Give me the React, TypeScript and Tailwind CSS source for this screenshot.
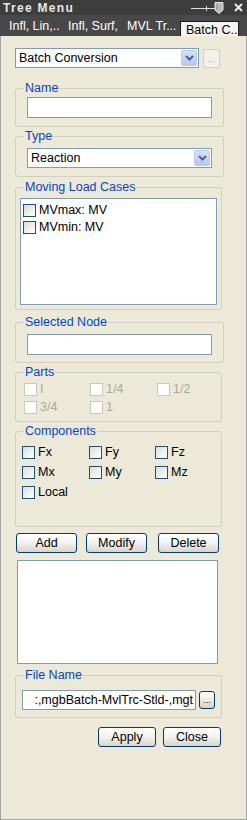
import type { ReactNode } from 'react';

const font = "font-['Liberation_Sans',Arial,sans-serif]";

function Group({ title, className = '', children }: { title: string; className?: string; children: ReactNode }) {
  return (
    <fieldset className={`w-[207px] rounded-[3px] border border-[#d0d0bf] ${className}`}>
      <legend className="ml-[8px] px-[1px] text-[12.5px] leading-[14px] text-[#0046d5]">{title}</legend>
      {children}
    </fieldset>
  );
}

function Check({ label, disabled = false }: { label: string; disabled?: boolean }) {
  return (
    <div className="flex h-[14px] items-center gap-[3px]">
      <span
        className={
          disabled
            ? 'h-[13px] w-[13px] border border-[#cac8bb] bg-white'
            : 'h-[13px] w-[13px] border border-[#1c5180] bg-gradient-to-br from-[#dcdcd7] to-white'
        }
      />
      <span className={`text-[12.5px] leading-[14px] ${disabled ? 'text-[#aca899]' : 'text-black'}`}>{label}</span>
    </div>
  );
}

function Btn({ label, className = '' }: { label: string; className?: string }) {
  return (
    <button
      className={`h-[20px] rounded-[3px] border border-[#003c74] bg-gradient-to-b from-white via-[#f3f2ee] to-[#d8d3c8] text-[12.5px] leading-[14px] text-black ${className}`}
    >
      {label}
    </button>
  );
}

function Chevron() {
  return (
    <svg width="9" height="6" viewBox="0 0 9 6">
      <path d="M1 1 L4.5 4.5 L8 1" fill="none" stroke="#4d6185" strokeWidth="2" />
    </svg>
  );
}

function Combo({ value, className = '' }: { value: string; className?: string }) {
  return (
    <div className={`flex h-[20px] items-center border border-[#7f9db9] bg-white ${className}`}>
      <span className="flex-1 pl-[3px] text-[12.5px] leading-[14px] text-black">{value}</span>
      <span className="mr-[1px] flex h-[16px] w-[16px] items-center justify-center rounded-[2px] border border-[#b9cbf4] bg-gradient-to-b from-[#d5e1fc] to-[#b3c8f5]">
        <Chevron />
      </span>
    </div>
  );
}

export default function App() {
  return (
    <div className={`flex h-[820px] w-[247px] flex-col bg-[#ece9d8] ${font}`}>
      {/* title bar */}
      <div className="flex h-[15px] items-center justify-between bg-[#3d3d3d] pl-[3px] pr-[4px]">
        <span className="text-[12px] font-bold leading-[14px] tracking-[1.3px] text-[#e6e6e6]">Tree Menu</span>
        <div className="flex items-center gap-[9px]">
          <svg width="34" height="13" viewBox="0 0 34 13">
            <path d="M0 7.5 H24" stroke="#e0e0e0" strokeWidth="1" />
            <path d="M15.5 5 V10" stroke="#e0e0e0" strokeWidth="1" />
            <path d="M24 1.5 H32 V9 L28 12.5 L24 9 Z" fill="#bdbdbd" stroke="#e6e6e6" strokeWidth="1" />
            <path d="M26 3 V9" stroke="#8a8a8a" strokeWidth="1" />
          </svg>
          <svg width="9" height="9" viewBox="0 0 9 9">
            <path d="M1 1 L8 8 M8 1 L1 8" stroke="#ededed" strokeWidth="2" />
          </svg>
        </div>
      </div>

      {/* tabs */}
      <div className="flex h-[21px] items-end bg-[#484848] pl-[9px] text-[12.5px] leading-[14px] text-white">
        <span className="mb-[3px] w-[59px]">Infl, Lin,..</span>
        <span className="mb-[3px] w-[59px]">Infl, Surf,</span>
        <span className="mb-[3px] w-[53px]">MVL Tr...</span>
        <span className="flex h-[15px] w-[59px] items-start border border-b-0 border-[#1b1b1b] bg-[#f4f3ee] pl-[5px] pt-[1px] text-black">
          Batch C..
        </span>
      </div>

      {/* panel */}
      <div className="flex flex-1 flex-col items-start border-x border-b border-[#a3a3a3] pl-[14px] pt-[12px]">
        <div className="flex items-center">
          <Combo value="Batch Conversion" className="w-[184px]" />
          <span className="ml-[4px] flex h-[19px] w-[17px] items-end justify-center rounded-[2px] border border-[#d2cfc0] bg-[#f2f0e8] pb-[3px] text-[9px] leading-[9px] text-[#b5b2a5]">
            ...
          </span>
        </div>

        <Group title="Name" className="mt-[13px]">
          <div className="px-[11px] pt-[2px] pb-[8px]">
            <div className="h-[21px] w-[185px] border border-[#7f9db9] bg-white" />
          </div>
        </Group>

        <Group title="Type" className="mt-[2px]">
          <div className="px-[11px] pt-[5px] pb-[8px]">
            <Combo value="Reaction" className="w-[185px]" />
          </div>
        </Group>

        <Group title="Moving Load Cases" className="mt-[3px]">
          <div className="px-[4px] pt-[4px] pb-[4px]">
            <div className="flex h-[107px] w-[197px] flex-col gap-[3px] border border-[#7f9db9] bg-white pl-[2px] pt-[4px]">
              <Check label="MVmax: MV" />
              <Check label="MVmin: MV" />
            </div>
          </div>
        </Group>

        <Group title="Selected Node" className="mt-[5px]">
          <div className="px-[11px] pt-[5px] pb-[7px]">
            <div className="h-[21px] w-[185px] border border-[#7f9db9] bg-white" />
          </div>
        </Group>

        <Group title="Parts" className="mt-[2px]">
          <div className="grid grid-cols-[66px_67px_auto] gap-y-[4px] pl-[8px] pt-[3px] pb-[7px]">
            <Check label="I" disabled />
            <Check label="1/4" disabled />
            <Check label="1/2" disabled />
            <Check label="3/4" disabled />
            <Check label="1" disabled />
          </div>
        </Group>

        <Group title="Components" className="mt-[2px]">
          <div className="grid grid-cols-[67px_66px_auto] gap-y-[6px] pl-[6px] pt-[7px] pb-[27px]">
            <Check label="Fx" />
            <Check label="Fy" />
            <Check label="Fz" />
            <Check label="Mx" />
            <Check label="My" />
            <Check label="Mz" />
            <Check label="Local" />
          </div>
        </Group>

        <div className="mt-[6px] ml-[1px] flex">
          <Btn label="Add" className="w-[61px]" />
          <Btn label="Modify" className="ml-[9px] w-[61px]" />
          <Btn label="Delete" className="ml-[11px] w-[61px]" />
        </div>

        <div className="mt-[7px] ml-[2px] h-[104px] w-[201px] border border-[#7f9db9] bg-white" />

        <Group title="File Name" className="mt-[4px]">
          <div className="flex items-center pl-[6px] pt-[8px] pb-[7px]">
            <div className="flex h-[20px] w-[174px] items-center justify-end overflow-hidden whitespace-nowrap border border-[#7f9db9] bg-white pr-[2px] text-[12.5px] leading-[14px] text-black">
              :,mgbBatch-MvlTrc-Stld-,mgt
            </div>
            <span className="ml-[3px] flex h-[18px] w-[16px] items-end justify-center rounded-[3px] border border-[#003c74] bg-gradient-to-b from-white to-[#d8d3c8] pb-[3px] text-[9px] leading-[9px] text-black">
              ...
            </span>
          </div>
        </Group>

        <div className="mt-[9px] ml-[83px] flex">
          <Btn label="Apply" className="w-[58px]" />
          <Btn label="Close" className="ml-[7px] w-[58px]" />
        </div>
      </div>
    </div>
  );
}
